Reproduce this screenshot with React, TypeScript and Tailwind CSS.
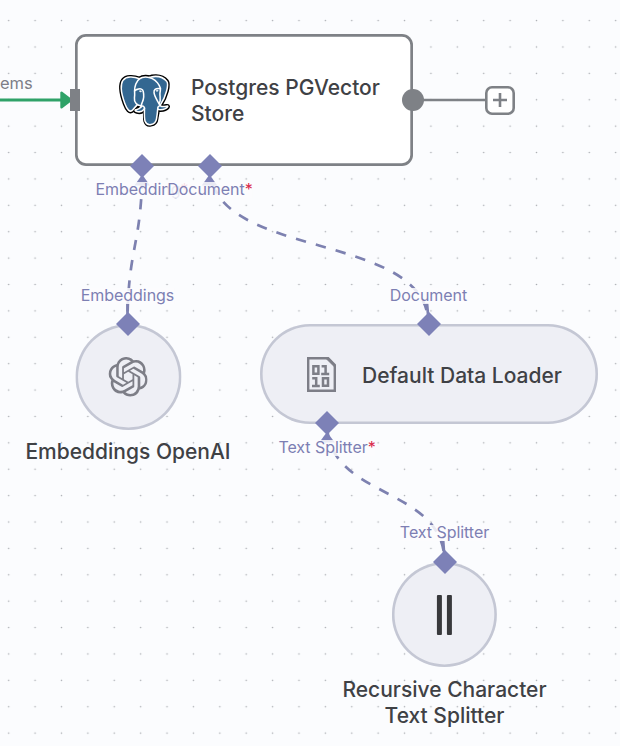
import React from 'react';
import clsx from 'clsx';
import { SiOpenai } from 'react-icons/si';

const EDGES = [
  { d: 'M142.2 166 C142.2 246 127.5 246 127.5 325', offset: -12.4 },
  { d: 'M209.5 166 C209.5 262 428.5 229 428.5 325', offset: 1.8 },
  { d: 'M327 423 C327 500 444.5 485 444.5 562', offset: -7 },
];

const ELEPHANT =
  'M402.395,271.23c-50.302,10.376-53.76-6.655-53.76-6.655c53.111-78.808,75.313-178.843,56.153-203.326c-52.27-66.785-142.752-35.2-144.262-34.38l-0.486,0.087c-9.938-2.063-21.06-3.292-33.56-3.496c-22.761-0.373-40.026,5.967-53.127,15.902c0,0-161.411-66.495-153.904,83.63c1.597,31.938,45.776,241.657,98.471,178.312c19.26-23.163,37.869-42.748,37.869-42.748c9.243,6.14,20.308,9.272,31.908,8.147l0.901-0.765c-0.28,2.876-0.152,5.689,0.361,9.019c-13.575,15.167-9.586,17.83-36.723,23.416c-27.459,5.659-11.328,15.734-0.796,18.367c12.768,3.193,42.307,7.716,62.266-20.224l-0.796,3.188c5.319,4.26,9.054,27.711,8.428,48.969c-0.626,21.259-1.044,35.854,3.147,47.254c4.191,11.4,8.368,37.05,44.042,29.406c29.809-6.388,45.256-22.942,47.405-50.555c1.525-19.631,4.976-16.729,5.194-34.28l2.768-8.309c3.192-26.611,0.507-35.196,18.872-31.203l4.463,0.392c13.517,0.615,31.208-2.174,41.591-7c22.358-10.376,35.618-27.7,13.573-23.148z';

const PostgresIcon = ({ className }: { className?: string }) => (
  <svg viewBox="0 0 432 445" className={className}>
    <path d={ELEPHANT} fill="#000" stroke="#000" strokeWidth="37" strokeLinejoin="round" />
    <path d={ELEPHANT} fill="#336791" />
    <g fill="none" stroke="#fff" strokeWidth="13" strokeLinecap="round" strokeLinejoin="round">
      <path d="M215.866,286.484c-1.385,49.516,0.348,99.377,5.193,111.495c4.848,12.118,15.223,35.688,50.9,28.045c29.806-6.39,40.651-18.756,45.357-46.051c3.466-20.082,10.148-75.854,11.005-87.281" />
      <path d="M173.104,38.256c0,0-161.521-66.016-154.012,84.109c1.597,31.938,45.779,241.664,98.473,178.316c19.256-23.166,36.671-41.335,36.671-41.335" />
      <path d="M260.349,26.207c-5.591,1.753,89.848-34.889,144.087,34.417c19.159,24.484-3.043,124.519-56.153,203.329" />
      <path d="M348.282,263.953c0,0,3.461,17.036,53.764,6.653c22.04-4.552,8.776,12.774-13.577,23.155c-18.345,8.514-59.474,10.696-60.146-1.069c-1.729-30.355,21.647-21.133,19.96-28.739c-1.525-6.85-11.979-13.573-18.894-30.338c-6.037-14.633-82.796-126.849,21.287-110.183c3.813-0.789-27.146-99.002-124.553-100.599c-97.385-1.597-94.19,119.762-94.19,119.762" />
      <path d="M188.604,274.334c-13.577,15.166-9.584,17.829-36.723,23.417c-27.459,5.66-11.326,15.733-0.797,18.365c12.768,3.195,42.307,7.718,62.266-20.229c6.078-8.509-0.036-22.086-8.385-25.547c-4.034-1.671-9.428-3.765-16.361,3.994z" />
      <path d="M187.715,274.069c-1.368-8.917,2.93-19.528,7.536-31.942c6.922-18.626,22.893-37.255,10.117-96.339c-9.523-44.029-73.396-9.163-73.436-3.193c-0.039,5.968,2.889,30.26-1.067,58.548c-5.162,36.913,23.488,68.132,56.479,64.938" />
      <path d="M350.676,123.432c0.863,15.994-3.445,26.888-3.988,43.914c-0.804,24.748,11.799,53.074-7.191,81.435" />
    </g>
    <g fill="#fff" stroke="#fff" strokeWidth="4">
      <path d="M172.517,141.7c-0.288,2.039,3.733,7.48,8.976,8.207c5.234,0.73,9.714-3.522,9.998-5.559c0.284-2.039-3.732-4.285-8.977-5.015c-5.237-0.731-9.719,0.333-9.996,2.367z" />
      <path d="M331.941,137.543c0.284,2.039-3.732,7.48-8.976,8.207c-5.238,0.73-9.718-3.522-10.005-5.559c-0.277-2.039,3.74-4.285,8.979-5.015c5.239-0.73,9.718,0.333,10.002,2.368z" />
    </g>
  </svg>
);

const BinaryFileIcon = ({ className }: { className?: string }) => (
  <svg viewBox="0 0 29 35" fill="none" stroke="#7d7e87" className={className}>
    <path d="M1.2 1.2H21.2L27.8 8V33.8H1.2Z" strokeWidth="2.4" />
    <path d="M20.5 1.2L27.8 8.5V10.2L19.5 2Z" fill="#7d7e87" strokeWidth="0.8" />
    <g strokeWidth="2.5">
      <path d="M6.4 9.2H11.4V16.8H6.4Z" />
      <path d="M14.6 9.2H18.6V17M14.2 16.9H22.2" />
      <path d="M5.2 21.2H9.2V29M5 28.9H12.8" />
      <path d="M16 21.2H21V28.8H16Z" />
    </g>
  </svg>
);

const Diamond = ({ className }: { className: string }) => (
  <svg viewBox="0 0 24 24" className={clsx('absolute size-6', className)}>
    <path d="M12 0L24 12L12 24L0 12Z" fill="#7d81b7" />
  </svg>
);

type LabelProps = { className: string; children: string; required?: boolean };

const Label = ({ className, children, required }: LabelProps) => (
  <span
    className={clsx(
      'absolute -translate-x-1/2 whitespace-nowrap bg-[#fbfcfe]/85 pb-px text-[16px] leading-[15px] tracking-[-0.05px] text-[#7d7fb3]',
      className,
    )}
  >
    {children}
    {required && <span className="text-[#d9284a]">*</span>}
  </span>
);

const TITLE = 'whitespace-nowrap text-[21px] font-[450] leading-[26px]';
const SUBNODE = 'flex items-center rounded-full bg-[#eeeff5] shadow-[inset_0_0_0_2.6px_#c4c7d4]';

const App = () => {
  return (
    <main className="relative h-[746px] w-[620px] overflow-hidden bg-[#fbfcfe] font-['Inter',sans-serif] text-[#3f4145]">
      <svg className="absolute inset-0" width="620" height="746" fill="none">
        <defs>
          <pattern id="dots" x="-4.5" y="7.4" width="26.39" height="26.39" patternUnits="userSpaceOnUse">
            <circle cx="13.2" cy="13.2" r="0.8" fill="#a9abb1" />
          </pattern>
        </defs>
        <rect width="620" height="746" fill="url(#dots)" />
        {EDGES.map(({ d, offset }) => (
          <path
            key={d}
            d={d}
            stroke="#7d81b0"
            strokeWidth="2.7"
            strokeDasharray="10.4 10.2"
            strokeDashoffset={offset}
          />
        ))}
        <path d="M127.5 303V320M427 303L428.5 320M443.2 541L444.5 558" stroke="#7d81b0" strokeWidth="2.7" />
        <path d="M0 100H62" stroke="#2fa268" strokeWidth="2.8" />
        <path d="M61.5 92.8V107.2L71 100Z" fill="#2fa268" stroke="#2fa268" strokeWidth="2.4" strokeLinejoin="round" />
        <path d="M412 100H486" stroke="#7e8186" strokeWidth="2.7" />
      </svg>

      <span className="absolute left-0 top-[73px] text-[16.5px] leading-5 text-[#7d7e87]">ems</span>

      <section className="absolute left-[75px] top-[34px] flex h-[132px] w-[338px] items-center rounded-[11px] bg-white pl-[44px] shadow-[inset_0_0_0_2.7px_#7e8186]">
        <PostgresIcon className="h-[53px] w-[51px] shrink-0 overflow-visible" />
        <h1 className={clsx(TITLE, 'ml-[21px] mt-[2px]')}>
          Postgres PGVector
          <br />
          Store
        </h1>
      </section>
      <i className="absolute left-[70px] top-[89px] h-[22px] w-[10px] bg-[#7e8186]" />
      <i className="absolute left-[402px] top-[89px] size-[22px] rounded-full bg-[#7e8186]" />
      <button className="absolute left-[485px] top-[85.5px] flex size-[29.5px] items-center justify-center rounded-[7px] bg-white shadow-[inset_0_0_0_2.6px_#7e8186]">
        <svg width="14" height="14" stroke="#7e8186" strokeWidth="2.6">
          <path d="M7 0V14M0 7H14" />
        </svg>
      </button>

      <section className="absolute left-[128px] top-[324px] flex -translate-x-1/2 flex-col items-center gap-[9px]">
        <div className={clsx(SUBNODE, 'size-[106px] justify-center')}>
          <SiOpenai className="size-[39.5px] text-[#7d7e87]" />
        </div>
        <h2 className={TITLE}>Embeddings OpenAI</h2>
      </section>

      <section className={clsx(SUBNODE, 'absolute left-[260px] top-[324px] h-[100px] w-[338px] pl-[47px]')}>
        <BinaryFileIcon className="h-[35px] w-[29px] shrink-0" />
        <h2 className={clsx(TITLE, 'ml-[26px] mt-[3px]')}>Default Data Loader</h2>
      </section>

      <section className="absolute left-[444.5px] top-[562px] flex -translate-x-1/2 flex-col items-center gap-[10px] text-center">
        <div className={clsx(SUBNODE, 'size-[105px] justify-center gap-[4.5px]')}>
          <i className="h-10 w-[5.5px] rounded-[1px] bg-[#38393c]" />
          <i className="h-10 w-[5.5px] rounded-[1px] bg-[#38393c]" />
        </div>
        <h2 className={TITLE}>
          Recursive Character
          <br />
          Text Splitter
        </h2>
      </section>

      <svg className="absolute inset-0" width="620" height="746" fill="#7d81b7">
        <path d="M142.2 174.5L150 185.5H134.4Z" />
        <path d="M209.5 174.5L217.3 185.5H201.7Z" />
        <path d="M327 432L334.8 442.5H319.2Z" />
      </svg>
      <Label className="left-[142px] top-[182px]" required>Embedding</Label>
      <Label className="left-[210px] top-[182px]" required>Document</Label>
      <Label className="left-[127.5px] top-[288px]">Embeddings</Label>
      <Label className="left-[428.5px] top-[288px]">Document</Label>
      <Label className="left-[327px] top-[440px]" required>Text Splitter</Label>
      <Label className="left-[444.5px] top-[525px]">Text Splitter</Label>

      <Diamond className="left-[130px] top-[154px]" />
      <Diamond className="left-[197.5px] top-[154px]" />
      <Diamond className="left-[115.5px] top-[312px]" />
      <Diamond className="left-[416.5px] top-[312px]" />
      <Diamond className="left-[315px] top-[411px]" />
      <Diamond className="left-[432.5px] top-[550px]" />
    </main>
  );
};

export default App;
